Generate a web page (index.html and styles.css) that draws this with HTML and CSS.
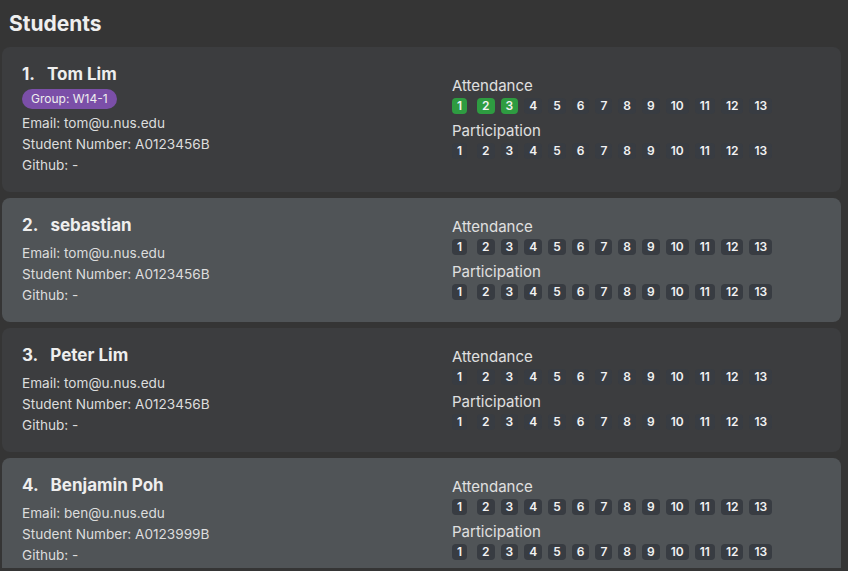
FILE: index.html
```html
<!DOCTYPE html>
<html>
<head>
<meta charset="utf-8">
<link rel="stylesheet" href="styles.css">
</head>
<body>
<div class="app">
  <div class="title">Students</div>
  <div class="list">
    <div class="card odd">
      <div class="left">
        <div class="name"><span class="idx">1.</span>Tom Lim</div>
        <div class="tags"><span class="tag">Group: W14-1</span></div>
        <div class="details tagged">
          <div>Email: tom@u.nus.edu</div>
          <div>Student Number: A0123456B</div>
          <div>Github: -</div>
        </div>
      </div>
      <div class="right">
        <div class="label">Attendance</div>
        <div class="weeks">
          <span class="wk on">1</span><span class="wk on">2</span><span class="wk on">3</span><span class="wk">4</span><span class="wk">5</span><span class="wk">6</span><span class="wk">7</span><span class="wk">8</span><span class="wk">9</span><span class="wk">10</span><span class="wk">11</span><span class="wk">12</span><span class="wk">13</span>
        </div>
        <div class="label second">Participation</div>
        <div class="weeks">
          <span class="wk">1</span><span class="wk">2</span><span class="wk">3</span><span class="wk">4</span><span class="wk">5</span><span class="wk">6</span><span class="wk">7</span><span class="wk">8</span><span class="wk">9</span><span class="wk">10</span><span class="wk">11</span><span class="wk">12</span><span class="wk">13</span>
        </div>
      </div>
    </div>

    <div class="card even">
      <div class="left">
        <div class="name"><span class="idx">2.</span>sebastian</div>
        <div class="details">
          <div>Email: tom@u.nus.edu</div>
          <div>Student Number: A0123456B</div>
          <div>Github: -</div>
        </div>
      </div>
      <div class="right">
        <div class="label">Attendance</div>
        <div class="weeks">
          <span class="wk">1</span><span class="wk">2</span><span class="wk">3</span><span class="wk">4</span><span class="wk">5</span><span class="wk">6</span><span class="wk">7</span><span class="wk">8</span><span class="wk">9</span><span class="wk">10</span><span class="wk">11</span><span class="wk">12</span><span class="wk">13</span>
        </div>
        <div class="label second">Participation</div>
        <div class="weeks">
          <span class="wk">1</span><span class="wk">2</span><span class="wk">3</span><span class="wk">4</span><span class="wk">5</span><span class="wk">6</span><span class="wk">7</span><span class="wk">8</span><span class="wk">9</span><span class="wk">10</span><span class="wk">11</span><span class="wk">12</span><span class="wk">13</span>
        </div>
      </div>
    </div>

    <div class="card odd">
      <div class="left">
        <div class="name"><span class="idx">3.</span>Peter Lim</div>
        <div class="details">
          <div>Email: tom@u.nus.edu</div>
          <div>Student Number: A0123456B</div>
          <div>Github: -</div>
        </div>
      </div>
      <div class="right">
        <div class="label">Attendance</div>
        <div class="weeks">
          <span class="wk">1</span><span class="wk">2</span><span class="wk">3</span><span class="wk">4</span><span class="wk">5</span><span class="wk">6</span><span class="wk">7</span><span class="wk">8</span><span class="wk">9</span><span class="wk">10</span><span class="wk">11</span><span class="wk">12</span><span class="wk">13</span>
        </div>
        <div class="label second">Participation</div>
        <div class="weeks">
          <span class="wk">1</span><span class="wk">2</span><span class="wk">3</span><span class="wk">4</span><span class="wk">5</span><span class="wk">6</span><span class="wk">7</span><span class="wk">8</span><span class="wk">9</span><span class="wk">10</span><span class="wk">11</span><span class="wk">12</span><span class="wk">13</span>
        </div>
      </div>
    </div>

    <div class="card even">
      <div class="left">
        <div class="name"><span class="idx">4.</span>Benjamin Poh</div>
        <div class="details">
          <div>Email: ben@u.nus.edu</div>
          <div>Student Number: A0123999B</div>
          <div>Github: -</div>
        </div>
      </div>
      <div class="right">
        <div class="label">Attendance</div>
        <div class="weeks">
          <span class="wk">1</span><span class="wk">2</span><span class="wk">3</span><span class="wk">4</span><span class="wk">5</span><span class="wk">6</span><span class="wk">7</span><span class="wk">8</span><span class="wk">9</span><span class="wk">10</span><span class="wk">11</span><span class="wk">12</span><span class="wk">13</span>
        </div>
        <div class="label second">Participation</div>
        <div class="weeks">
          <span class="wk">1</span><span class="wk">2</span><span class="wk">3</span><span class="wk">4</span><span class="wk">5</span><span class="wk">6</span><span class="wk">7</span><span class="wk">8</span><span class="wk">9</span><span class="wk">10</span><span class="wk">11</span><span class="wk">12</span><span class="wk">13</span>
        </div>
      </div>
    </div>
  </div>
</div>
</body>
</html>
```

FILE: styles.css
```css
* { box-sizing: border-box; }
html, body {
  margin: 0;
  padding: 0;
  background: #353535;
  width: 848px;
  height: 571px;
  overflow: hidden;
  font-family: Inter, "Noto Sans", sans-serif;
  color: #e6e6e6;
}
.app {
  display: flex;
  flex-direction: column;
  height: 571px;
}
.title {
  font-size: 21px;
  font-weight: 700;
  line-height: 28px;
  padding: 10px 9px 9px;
  color: #eeeeee;
  height: 47px;
}
.list {
  height: 521px;
  overflow: hidden;
  padding-left: 2px;
  width: 841px;
  display: flex;
  flex-direction: column;
  gap: 6px;
}
.card {
  flex-shrink: 0;
  display: flex;
  align-items: center;
  border-radius: 8px;
  padding: 15px 20px 16px;
}
.card.odd { background: #3c3d3f; }
.card.even { background: #505457; }
.left {
  width: 430px;
  flex-shrink: 0;
}
.name {
  font-size: 17px;
  font-weight: 700;
  line-height: 24px;
  color: #eeeeee;
}
.idx {
  display: inline-block;
  margin-right: 12px;
}
.tags {
  margin-top: 3px;
  display: flex;
}
.tag {
  background: #7b4fa8;
  color: #eeeeee;
  font-size: 12px;
  line-height: 20px;
  height: 20px;
  padding: 0 9px;
  border-radius: 10px;
}
.details {
  margin-top: 6px;
  font-size: 13.6px;
  line-height: 21px;
  color: #dddddd;
}
.details.tagged { margin-top: 4px; }
.right {
  padding-bottom: 2px;
}
.label {
  font-size: 15px;
  line-height: 18px;
  color: #e0e0e0;
  margin-bottom: 3px;
}
.label.second { margin-top: 8px; }
.weeks {
  display: flex;
  gap: 6px;
}
.wk {
  height: 16px;
  line-height: 16px;
  padding: 0 5px;
  border-radius: 4px;
  background: #383c42;
  color: #f2f2f2;
  font-size: 12px;
  font-weight: 600;
  text-align: center;
}
.wk:first-child { margin-right: 4px; }
.wk.on { background: #2e9c41; }
```
